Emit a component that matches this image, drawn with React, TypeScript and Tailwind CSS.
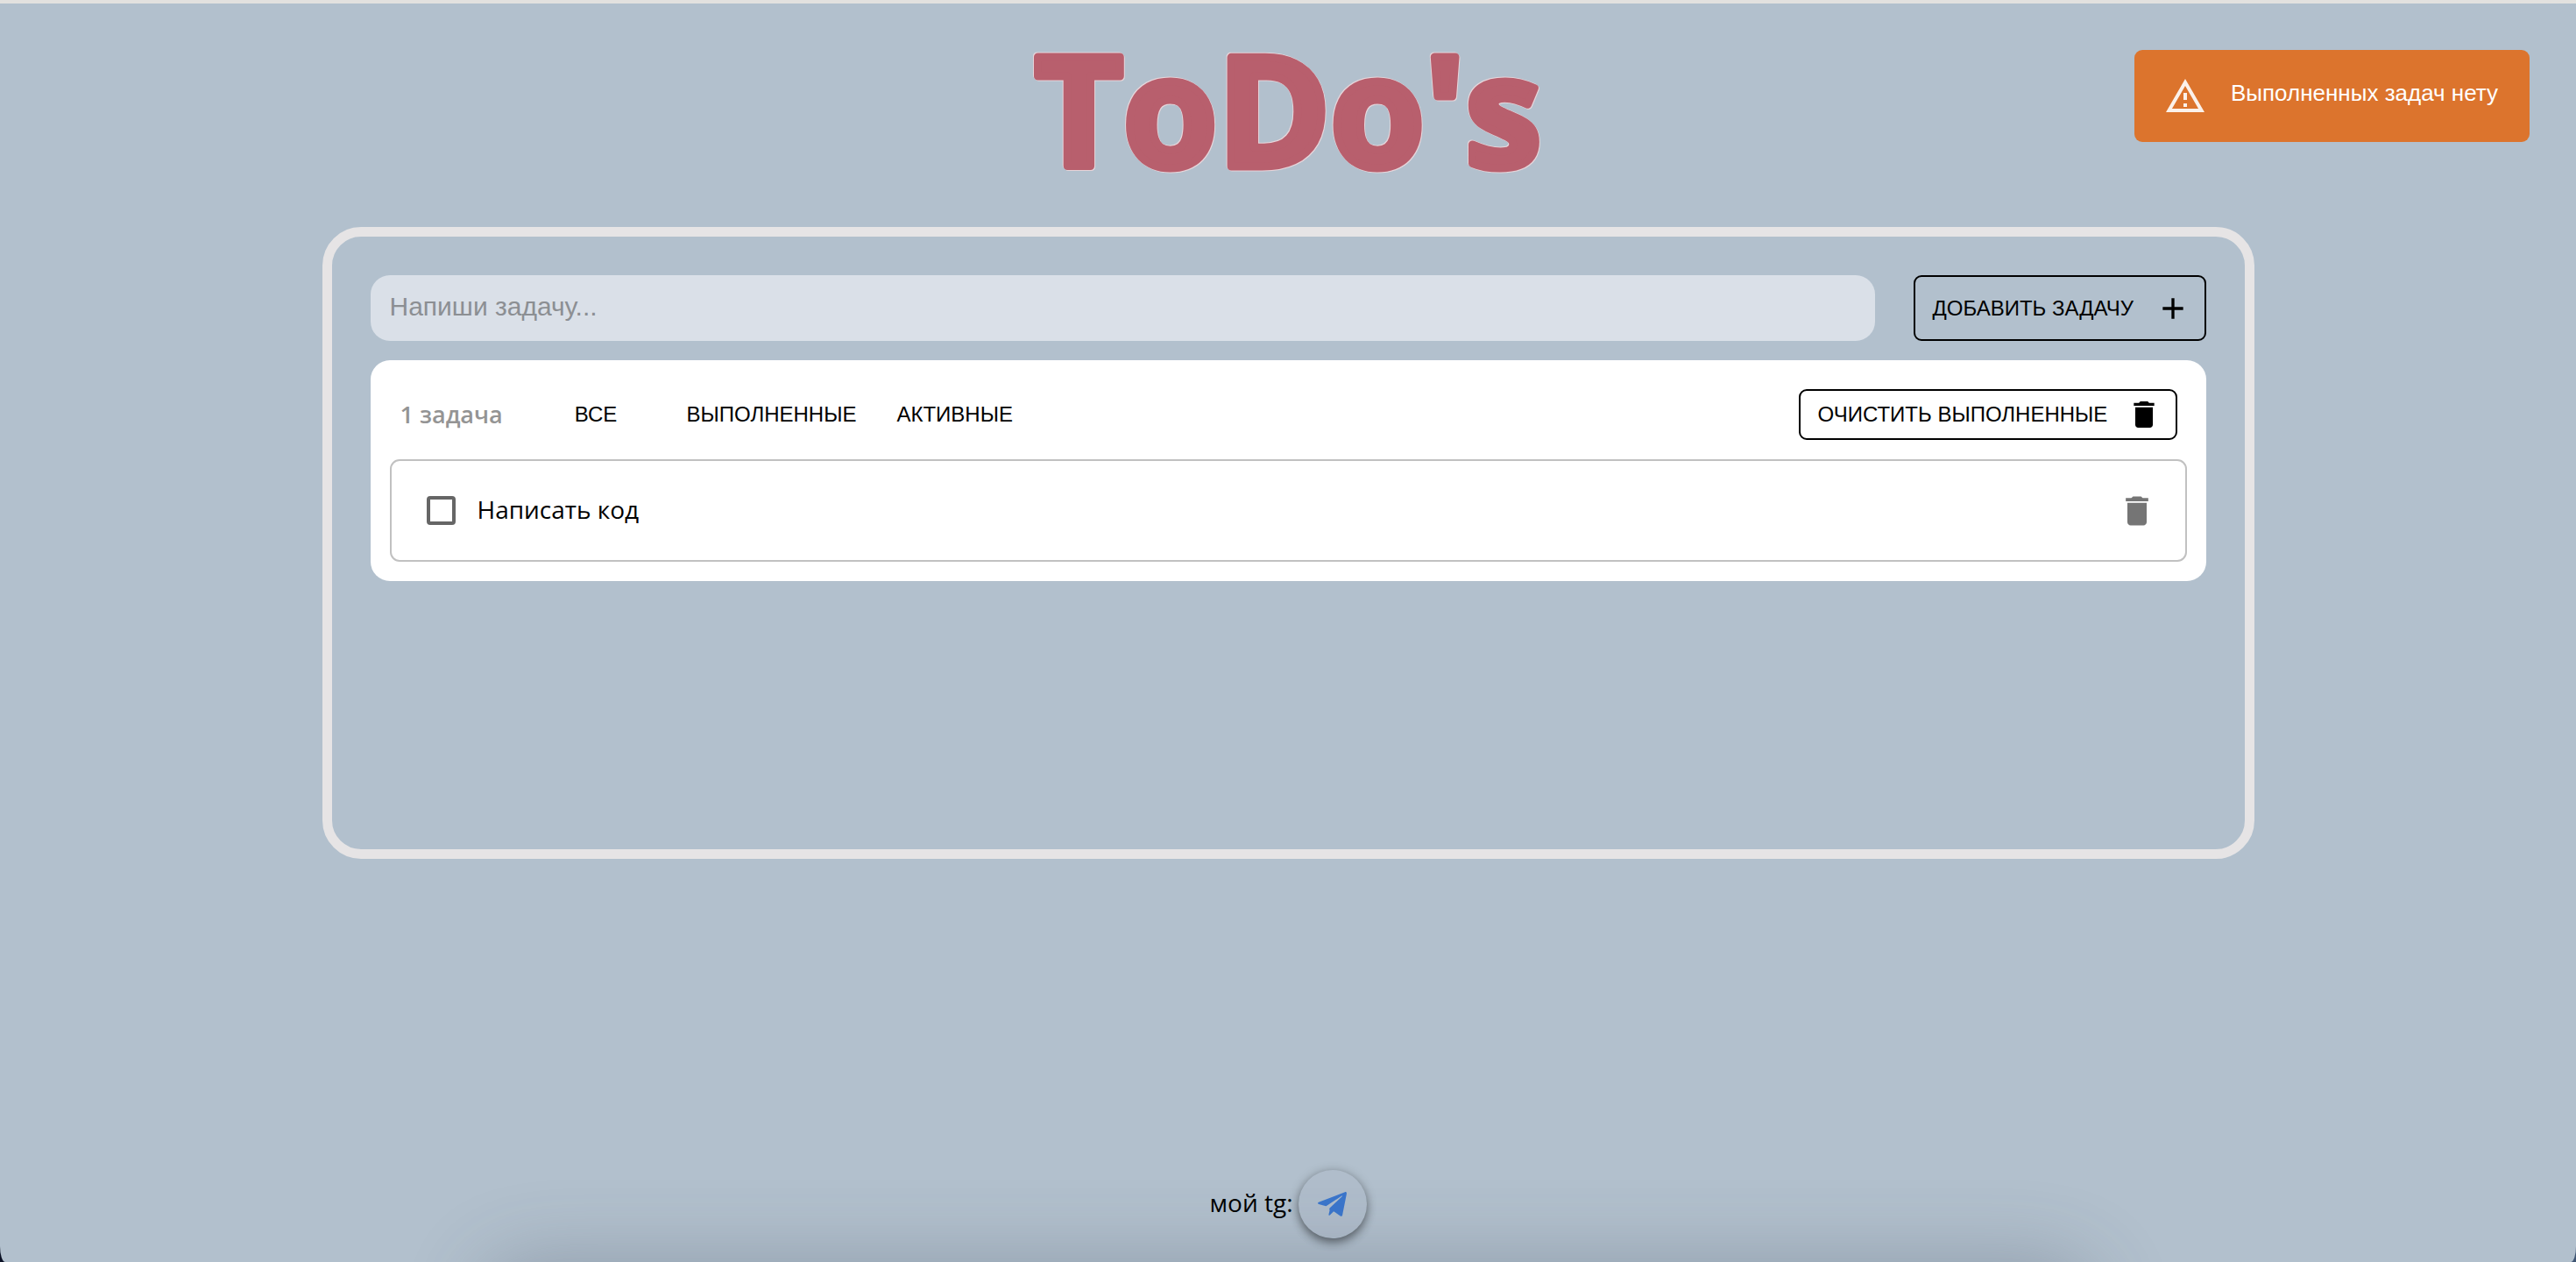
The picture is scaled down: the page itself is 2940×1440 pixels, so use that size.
import { useState } from "react";

const tasks = [{ id: "task-1", title: "Написать код" }];
const filters = ["Все", "Выполненные", "Активные"];

function Logo() {
  return (
    <svg
      className="h-[255px] w-full overflow-visible [filter:drop-shadow(1px_1px_0_#e6d5da)_drop-shadow(-1px_-1px_0_#e6d5da)]"
    >
      <text
        x="50%"
        y="186"
        textAnchor="middle"
        strokeLinejoin="round"
        className="fill-[#b85f6d] stroke-[#b85f6d] stroke-[9px] font-['Open_Sans',sans-serif] text-[174px] font-bold"
      >
        ToDo's
      </text>
    </svg>
  );
}

function TrashIcon({ className }: { className: string }) {
  return (
    <svg viewBox="0 0 24 24" fill="currentColor" className={className} aria-hidden="true">
      <path d="M6 19c0 1.1.9 2 2 2h8c1.1 0 2-.9 2-2V7H6v12zM19 4h-3.5l-1-1h-5l-1 1H5v2h14V4z" />
    </svg>
  );
}

function PlusIcon() {
  return (
    <svg viewBox="0 0 24 24" fill="currentColor" className="size-10" aria-hidden="true">
      <path d="M19 13h-6v6h-2v-6H5v-2h6V5h2v6h6v2z" />
    </svg>
  );
}

function WarningIcon() {
  return (
    <svg viewBox="0 0 24 24" fill="currentColor" className="size-12 shrink-0 opacity-90" aria-hidden="true">
      <path d="M12 5.99L19.53 19H4.47L12 5.99M12 2L1 21h22L12 2zm1 14h-2v2h2v-2zm0-6h-2v4h2v-4z" />
    </svg>
  );
}

function TelegramIcon() {
  return (
    <svg viewBox="0 0 33 28" fill="currentColor" className="w-[33px]" aria-hidden="true">
      <path d="M31 .2 1 11.7c-1.300.5-1.300 1.800.1 2.300l7.200 2.100c.6.200 1.100.1 1.600-.2L27.400 4.600c.5-.3.900.100.500.500L13.800 18.300c-.900.900-.7 1.900-.2 2.400L12.400 26c0 .9.800 1.100 1.400.5l4.300-4.300 7.600 5.200c1.200.7 2.100.3 2.400-1L32.900 2.200C33.200.7 32.200-.3 31 .2z" />
    </svg>
  );
}

function Toast() {
  return (
    <div
      role="alert"
      className="absolute top-[53px] right-[53px] flex h-[105px] items-center gap-7 rounded-[9px] bg-[#dc742d] pr-9 pl-[34px] font-['Liberation_Sans',Arial,sans-serif] text-[26px] text-white"
    >
      <WarningIcon />
      <p className="pb-2 leading-8">Выполненных задач нету</p>
    </div>
  );
}

export default function App() {
  const [text, setText] = useState("");
  return (
    <div className="bg-[linear-gradient(to_right,#0a1024_50%,#3f5673_50%)]">
      <div className="relative flex min-h-screen flex-col items-center overflow-hidden border-t-4 border-[#e2e1df] bg-[#b2c0cd] font-['Open_Sans','Noto_Sans',sans-serif] text-black [border-bottom-left-radius:6px_18px] [border-bottom-right-radius:6px_18px]">
        <h1 className="flex w-full">
          <Logo />
        </h1>

        <main className="flex min-h-[721px] w-3/4 flex-col gap-[22px] rounded-[44px] border-[11px] border-[#e6e4e5] p-11">
          <form className="flex h-[75px] gap-11" onSubmit={(e) => e.preventDefault()}>
            <input
              type="text"
              aria-label="Новая задача"
              placeholder="Напиши задачу..."
              value={text}
              onChange={(e) => setText(e.target.value)}
              className="min-w-0 flex-1 rounded-[22px] bg-[#dae0e8] px-[22px] pb-1 font-['Liberation_Sans',Arial,sans-serif] text-[30px] outline-none placeholder:text-[#8c8f93]"
            />
            <button
              type="submit"
              className="flex w-[334px] items-center justify-between rounded-[9px] border-2 border-black pr-4 pl-5 font-['Liberation_Sans',Arial,sans-serif] text-[24px] uppercase"
            >
              Добавить задачу
              <PlusIcon />
            </button>
          </form>

          <section className="flex flex-col gap-[22px] rounded-[22px] bg-white px-[22px] pt-[33px] pb-[22px]">
            <div className="flex h-[58px] items-center pr-[11px] pl-3">
              <p className="w-[153px] text-[27px] font-semibold text-[#949494]">1 задача</p>
              <nav className="flex flex-1 items-center gap-5" aria-label="Фильтр">
                {filters.map((name) => (
                  <button
                    key={name}
                    type="button"
                    className="min-w-[141px] px-[13px] font-['Liberation_Sans',Arial,sans-serif] text-[24px] uppercase"
                  >
                    {name}
                  </button>
                ))}
              </nav>
              <button
                type="button"
                className="flex h-full w-[432px] items-center justify-between rounded-[9px] border-2 border-black pr-4 pl-5 font-['Liberation_Sans',Arial,sans-serif] text-[24px] uppercase"
              >
                Очистить выполненные
                <TrashIcon className="size-10" />
              </button>
            </div>

            <ul className="flex flex-col gap-[22px]">
              {tasks.map((task) => (
                <li
                  key={task.id}
                  className="flex h-[117px] items-center rounded-[11px] border-2 border-[#c1c1c1] pr-[33px] pl-10"
                >
                  <input
                    id={task.id}
                    type="checkbox"
                    className="size-[33px] appearance-none rounded-[4px] border-4 border-[#666] checked:bg-[#666]"
                  />
                  <label htmlFor={task.id} className="flex-1 pb-1 pl-[25px] text-[28px]">
                    {task.title}
                  </label>
                  <button type="button" aria-label="Удалить" className="text-[#757575]">
                    <TrashIcon className="size-11" />
                  </button>
                </li>
              ))}
            </ul>
          </section>
        </main>

        <footer className="mt-auto flex items-center gap-[6px] pb-[27px] text-[28px]">
          <span className="pb-1">мой tg:</span>
          <a
            href="#telegram"
            aria-label="Telegram"
            className="flex size-[78px] items-center justify-center rounded-full bg-[#b0bdcb] text-[#3b76cc] shadow-[0_7px_11px_-2px_rgba(0,0,0,0.3),0_2px_12px_rgba(0,0,0,0.35)]"
          >
            <TelegramIcon />
          </a>
        </footer>

        <div className="pointer-events-none absolute inset-x-[590px] -bottom-20 h-10 rounded-full shadow-[0_0_90px_40px_rgba(60,70,90,0.3)]" />
        <Toast />
      </div>
    </div>
  );
}
